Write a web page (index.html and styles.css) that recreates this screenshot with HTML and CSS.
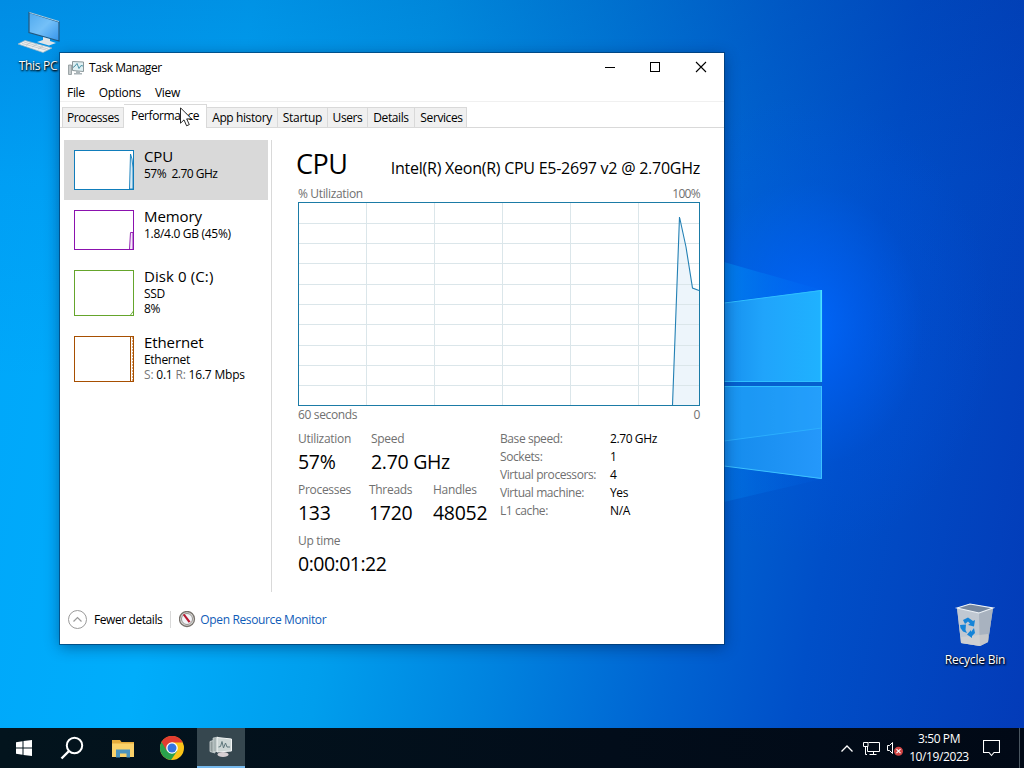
FILE: index.html
```html
<!DOCTYPE html>
<html lang="en">
<head>
  <meta charset="UTF-8" />
  <meta name="viewport" content="width=device-width, initial-scale=1.0" />
  <title>Task Manager</title>
  <link rel="stylesheet" href="styles.css">
</head>
<body>
  <div class="desktop">
    <!-- Wallpaper -->
    <svg class="wallpaper" viewBox="0 0 1024 728" preserveAspectRatio="none">
      <defs>
        <linearGradient id="pane" x1="0" y1="0" x2="1" y2="0">
          <stop offset="0%" stop-color="#168fee"/>
          <stop offset="40%" stop-color="#20a4fb"/>
          <stop offset="100%" stop-color="#1fb2ff"/>
        </linearGradient>
        <linearGradient id="paneLow" x1="0" y1="0" x2="1" y2="0">
          <stop offset="0%" stop-color="#148bec"/>
          <stop offset="100%" stop-color="#2598fb"/>
        </linearGradient>
        <linearGradient id="beam" x1="0" y1="0" x2="1" y2="0">
          <stop offset="0%" stop-color="#0088f0" stop-opacity="0.7"/>
          <stop offset="100%" stop-color="#006cf8" stop-opacity="0.1"/>
        </linearGradient>
      </defs>
      <path d="M724 262 L822 290 L724 302Z" fill="url(#beam)"/>
      <path d="M724 466 L822 479 L724 502Z" fill="url(#beam)" opacity="0.5"/>
      <path d="M724 303 L822 290 V382 H724Z" fill="url(#pane)"/>
      <path d="M724 386 H822 V479 L724 466Z" fill="url(#paneLow)"/>
      <path d="M724 386 H822 V428 L724 441Z" fill="#25b0ff" opacity="0.3"/>
      <path d="M724 441 L822 428" stroke="#2fb4ff" stroke-width="0.800"/>
      <path d="M724 382 H822 V386 H724Z" fill="#0560cf"/>
      <path d="M724 303 L821 290.500 V381.500 H724 M724 386.500 H821" fill="none" stroke="#2fc0ff" stroke-width="1"/>
      <path d="M821.500 386 V478.500 L724 466" fill="none" stroke="#3cc2ff" stroke-width="1"/>
      <path d="M821.300 290 V382" stroke="#4be0ff" stroke-width="1.500"/>
    </svg>

    <!-- Desktop icons -->
    <div class="icon this-pc">
      <svg width="46" height="44" viewBox="0 0 46 44">
        <defs>
          <linearGradient id="screen" x1="0" y1="0" x2="1" y2="1">
            <stop offset="0%" stop-color="#4fa9ee"/>
            <stop offset="50%" stop-color="#74c0f8"/>
            <stop offset="100%" stop-color="#3494ea"/>
          </linearGradient>
        </defs>
        <path d="M14 2.500 L44 12 V31 L14 22.500Z" fill="url(#screen)" stroke="#24587e" stroke-width="1.200"/>
        <path d="M14.500 2.500 L44 11.500" stroke="#c8e8fa" stroke-width="0.800"/>
        <path d="M28 27 L35 29 V31 L41 33 L34 35.500 L22 32 L28 30Z" fill="#dde4e8"/>
        <path d="M3 34 L10 30.500 L37 38 L28 42.500Z" fill="#eef0f0" stroke="#9bb4c4" stroke-width="0.700"/>
        <path d="M7 33.500 L31 40 M9 32 L33 39 M11 35.500 L16 32 M17 37 L22 34 M23 39 L28 36" stroke="#b6bfc4" stroke-width="0.700"/>
      </svg>
      <span class="icon-label">This PC</span>
    </div>
    <div class="icon recycle-bin">
      <svg width="42" height="46" viewBox="0 0 42 46">
        <path d="M3 6 L16 2 L39 6 L34 40 L26 44 L7 41Z" fill="#b4bcc6"/>
        <path d="M3 6 L25 11 L26 44 L7 41Z" fill="#c0c8d2"/>
        <path d="M25 11 L39 6 L34 40 L26 44Z" fill="#a8b2bf"/>
        <path d="M3 6 L16 2 L39 6 L25 11Z" fill="#77889e" stroke="#eef3f8" stroke-width="1.200"/>
        <path d="M7 35 L34 32 V40 L26 44 L7 41Z" fill="#d8d6d2" opacity="0.600"/>
        <g fill="#1584d8">
          <path d="M9 18 L14 15.500 L19 19 L21 18 L20 24.500 L14 23 L16 21.500 L14 19.500 L11 22Z"/>
          <path d="M6 23 L12 22.500 L11.500 28 L13 31 L9 29.500 L6.500 26Z"/>
          <path d="M20 26 L21 31 L18 34 L18 36 L13 32.500 L17 28 L17 30Z"/>
        </g>
      </svg>
      <span class="icon-label">Recycle Bin</span>
    </div>

    <!-- Task Manager window -->
    <div class="window">
      <div class="titlebar">
        <svg class="app-icon" width="17" height="16" viewBox="0 0 17 16">
          <path d="M0.500 5 H3.500 V14.500 H0.500Z" fill="#c4cacc" stroke="#8c9598" stroke-width="0.800"/>
          <path d="M4.500 1.500 L15.500 2 V11.500 L4.500 10.500Z" fill="#e0f0f3" stroke="#8b979a"/>
          <path d="M5 7.500 L7 6 L9 3.500 L11 8.500 L13 5.500 L15 6" fill="none" stroke="#4b93a6" stroke-width="1"/>
          <path d="M8 11 H12 V13 H14 V14.500 H6 V13 H8Z" fill="#aab4b8"/>
        </svg>
        <span class="title">Task Manager</span>
        <div class="controls">
          <svg width="46" height="30" viewBox="0 0 46 30"><path d="M18 14.500 H28" stroke="#000"/></svg>
          <svg width="45" height="30" viewBox="0 0 45 30"><rect x="17.500" y="9.500" width="9" height="9" fill="none" stroke="#000"/></svg>
          <svg width="46" height="30" viewBox="0 0 46 30"><path d="M18 9 L28 19 M28 9 L18 19" stroke="#000" stroke-width="1.100"/></svg>
        </div>
      </div>
      <div class="menu">
        <span>File</span>
        <span>Options</span>
        <span>View</span>
      </div>
      <div class="tabs">
        <div class="tab tab-processes">Processes</div>
        <div class="tab tab-performance active">Performance</div>
        <div class="tab tab-history">App history</div>
        <div class="tab tab-startup">Startup</div>
        <div class="tab tab-users">Users</div>
        <div class="tab tab-details">Details</div>
        <div class="tab tab-services">Services</div>
      </div>

      <div class="main">
        <div class="sidebar">
          <div class="item selected">
            <svg class="thumb" width="60" height="40" viewBox="0 0 60 40">
              <rect x="0.500" y="0.500" width="59" height="39" fill="#fff" stroke="#117dbb"/>
              <path d="M55.500 39 L56.500 4 L58 9 L59 18 V39Z" fill="#d9eaf4" stroke="#117dbb" stroke-width="0.900"/>
            </svg>
            <div class="item-text">
              <div class="item-name">CPU</div>
              <div class="item-info usage">57%&nbsp; 2.70 GHz</div>
            </div>
          </div>
          <div class="item">
            <svg class="thumb" width="60" height="40" viewBox="0 0 60 40">
              <rect x="0.500" y="0.500" width="59" height="39" fill="#fff" stroke="#8b12ae"/>
              <path d="M55.500 39 L56.500 22.500 H59 V39" fill="#f4eaf8" stroke="#8b12ae" stroke-width="0.900"/>
            </svg>
            <div class="item-text">
              <div class="item-name">Memory</div>
              <div class="item-info">1.8/4.0 GB (45%)</div>
            </div>
          </div>
          <div class="item tall">
            <svg class="thumb" width="60" height="46" viewBox="0 0 60 46">
              <rect x="0.500" y="0.500" width="59" height="45" fill="#fff" stroke="#65a52c"/>
              <path d="M56.500 45 L59.500 41" stroke="#65a52c" stroke-width="0.900"/>
            </svg>
            <div class="item-text">
              <div class="item-name disk-name">Disk 0 (C:)</div>
              <div class="item-info">SSD</div>
              <div class="item-info">8%</div>
            </div>
          </div>
          <div class="item tall">
            <svg class="thumb" width="60" height="46" viewBox="0 0 60 46">
              <rect x="0.500" y="0.500" width="59" height="45" fill="#fff" stroke="#a74f01"/>
              <path d="M56.500 1 V45" stroke="#a74f01"/>
              <path d="M58.500 1 V45" stroke="#d9a677" stroke-dasharray="2 1"/>
            </svg>
            <div class="item-text">
              <div class="item-name">Ethernet</div>
              <div class="item-info">Ethernet</div>
              <div class="item-info traffic"><i>S:</i> 0.1 <i>R:</i> 16.7 Mbps</div>
            </div>
          </div>
        </div>

        <div class="details">
          <div class="heading">
            <h1>CPU</h1>
            <span class="model">Intel(R) Xeon(R) CPU E5-2697 v2 @ 2.70GHz</span>
          </div>
          <div class="caption"><span>% Utilization</span><span class="max">100%</span></div>
          <svg class="graph" width="402" height="204" viewBox="0 0 402 204">
            <rect x="0.500" y="0.500" width="401" height="203" fill="#fff"/>
            <path d="M374.500 203 L381.500 15 L388 45 L394.500 86 L401 88.500 V203Z" fill="#edf5fb"/>
            <path d="M68.500 1 V203 M136.500 1 V203 M204.500 1 V203 M272.500 1 V203 M340.500 1 V203 M1 21.500 H401 M1 41.500 H401 M1 61.500 H401 M1 82.500 H401 M1 102.500 H401 M1 122.500 H401 M1 143.500 H401 M1 163.500 H401 M1 183.500 H401" stroke="#dbe6ea" stroke-width="1"/>
            <path d="M374.500 203 L381.500 15 L388 45 L394.500 86 L401 88.500" fill="none" stroke="#2380b4" stroke-width="1.100"/>
            <rect x="0.500" y="0.500" width="401" height="203" fill="none" stroke="#1b7ba6"/>
          </svg>
          <div class="caption bottom"><span>60 seconds</span><span>0</span></div>

          <div class="stats">
            <div class="stats-left">
              <div class="stat-row">
                <div class="stat utilization"><label>Utilization</label><b>57%</b></div>
                <div class="stat"><label>Speed</label><b>2.70 GHz</b></div>
              </div>
              <div class="stat-row">
                <div class="stat processes"><label>Processes</label><b>133</b></div>
                <div class="stat threads"><label>Threads</label><b>1720</b></div>
                <div class="stat"><label>Handles</label><b>48052</b></div>
              </div>
              <div class="stat-row">
                <div class="stat"><label>Up time</label><b class="uptime">0:00:01:22</b></div>
              </div>
            </div>
            <div class="specs">
              <label>Base speed:</label><span>2.70 GHz</span>
              <label>Sockets:</label><span>1</span>
              <label>Virtual processors:</label><span>4</span>
              <label>Virtual machine:</label><span>Yes</span>
              <label>L1 cache:</label><span>N/A</span>
            </div>
          </div>
        </div>
      </div>

      <div class="footer">
        <svg width="20" height="20" viewBox="0 0 20 20">
          <circle cx="9.500" cy="9.500" r="9" fill="#fff" stroke="#9a9a9a"/>
          <path d="M5.500 11.500 L9.500 7.500 L13.500 11.500" fill="none" stroke="#9a9a9a" stroke-width="1.200"/>
        </svg>
        <span class="fewer">Fewer details</span>
        <span class="separator"></span>
        <svg width="17" height="17" viewBox="0 0 17 17">
          <circle cx="8" cy="8" r="7.500" fill="#dededb" stroke="#77726d" stroke-width="1.300"/>
          <circle cx="8" cy="8" r="5.500" fill="#f2f4f8" stroke="#8f8a86" stroke-width="0.900"/>
          <path d="M3.700 3.700 L5.700 3.100 L11.500 10.500 L9.700 11.700Z" fill="#b81830"/>
        </svg>
        <a class="monitor">Open Resource Monitor</a>
      </div>
    </div>

    <svg class="cursor" width="13" height="20" viewBox="0 0 13 20">
      <path d="M0.500 0.800 V16.200 L4 12.900 L6.600 18.800 L9.300 17.600 L6.700 11.900 H11.600Z" fill="#fff" stroke="#111" stroke-width="0.900"/>
    </svg>
  </div>

  <div class="taskbar">
    <div class="task">
      <svg width="16" height="16" viewBox="0 0 16 16">
        <path d="M0 2.200 L6.500 1.300 V7.500 H0Z M7.500 1.100 L16 0 V7.500 H7.500Z M0 8.500 H6.500 V14.700 L0 13.800Z M7.500 8.500 H16 V16 L7.500 14.900Z" fill="#fff"/>
      </svg>
    </div>
    <div class="task">
      <svg width="24" height="24" viewBox="0 0 24 24">
        <circle cx="14.500" cy="9.500" r="7.700" fill="none" stroke="#fff" stroke-width="2"/>
        <path d="M9 15 L1.500 22.500" stroke="#fff" stroke-width="2.400"/>
      </svg>
    </div>
    <div class="task explorer">
      <svg width="22" height="19" viewBox="0 0 22 19">
        <path d="M0 1 H8 L9.500 3 H22 V18 H0Z" fill="#e5ac3c"/>
        <path d="M0 4.500 H22 V18 H0Z" fill="#fad26a"/>
        <path d="M4 10.500 H18 V18.500 H14.500 V14.500 H8 V18.500 H4Z" fill="#4b93bd"/>
      </svg>
    </div>
    <div class="task">
      <svg width="24" height="24" viewBox="0 0 24 24">
        <circle cx="12" cy="12" r="12" fill="#fbc418"/>
        <path d="M1.600 6 A12 12 0 0 0 11 24 L17.200 15 L12 12Z" fill="#2aa24c"/>
        <path d="M1.600 6 L7 15 L12 6.500 H22.700 A12 12 0 0 0 1.600 6Z" fill="#e23c30"/>
        <circle cx="12" cy="12" r="5.800" fill="#fff"/>
        <circle cx="12" cy="12" r="4.500" fill="#3474e0"/>
      </svg>
    </div>
    <div class="task running">
      <svg width="24" height="22" viewBox="0 0 24 22">
        <path d="M1 5.500 L6 4 V17 L1 15.500Z" fill="#8f9b9b" stroke="#d5dcdc" stroke-width="0.800"/>
        <path d="M4 2 L9 1 V15.500 H4Z" fill="#a8b4b4" stroke="#d5dcdc" stroke-width="0.600"/>
        <path d="M8 1.500 L22.500 3 V15 L8 16Z" fill="#cdd6d5" stroke="#f2f5f5"/>
        <path d="M9.500 11 L11.500 10.500 L13 5.500 L14.500 12 L16.500 7 L18 11 H21" fill="none" stroke="#5f777c" stroke-width="1"/>
        <ellipse cx="14" cy="18.500" rx="5.500" ry="2.500" fill="#d7cfd2"/>
      </svg>
    </div>
    <div class="tray">
      <svg width="14" height="9" viewBox="0 0 14 9"><path d="M1.500 7.500 L7 2 L12.500 7.500" fill="none" stroke="#fff" stroke-width="1.300"/></svg>
      <svg class="network" width="17" height="15" viewBox="0 0 17 15">
        <path d="M5.500 1.500 H16.500 V10.500 H4.500 V6 M10.500 10.500 V13.500 M6.500 13.500 H13.500" fill="none" stroke="#fff"/>
        <path d="M0.500 1.500 H5 V5.500 H0.500Z M2.500 5.500 V13.500 H4" fill="none" stroke="#fff"/>
      </svg>
      <svg class="volume" width="17" height="15" viewBox="0 0 17 15">
        <path d="M0.500 4.500 H2.500 L5.500 1.500 V12.500 L2.500 9.500 H0.500Z" fill="none" stroke="#fff"/>
        <circle cx="11.500" cy="10.200" r="4.500" fill="#d04444"/>
        <path d="M9.500 8.200 L13.500 12.200 M13.500 8.200 L9.500 12.200" stroke="#fff" stroke-width="1.100"/>
      </svg>
      <div class="clock"><span>3:50 PM</span><span>10/19/2023</span></div>
      <svg class="notify" width="17" height="17" viewBox="0 0 17 17"><path d="M0.500 0.500 H16.500 V12.500 H11 L8.500 15.500 L6 12.500 H0.500Z" fill="none" stroke="#fff" stroke-width="1.100"/></svg>
      <span class="show-desktop"></span>
    </div>
  </div>
</body>
</html>
```

FILE: styles.css
```css
* {
  box-sizing: border-box;
}
body {
  margin: 0;
  width: 1024px;
  height: 768px;
  overflow: hidden;
  display: flex;
  flex-direction: column;
  font-family: "Open Sans", "Noto Sans", sans-serif;
  font-size: 12px;
  letter-spacing: -0.4px;
  color: #000;
}
svg {
  display: block;
  flex: none;
}
/* Desktop */
.desktop {
  position: relative;
  height: 728px;
  background:
    radial-gradient(ellipse 190px 230px at 805px 325px, rgba(0, 104, 255, 0.9) 0, rgba(0, 98, 250, 0.6) 28%, rgba(0, 85, 230, 0.2) 62%, rgba(0, 80, 225, 0) 100%),
    linear-gradient(to bottom, rgba(0, 40, 140, 0.2) 0, rgba(0, 60, 170, 0.08) 180px, rgba(0, 0, 0, 0) 380px),
    linear-gradient(100deg, #00a6fa 0%, #00adfb 22%, #009eed 38%, #0083df 53%, #0064d2 68%, #004fc8 80%, #033bb8 100%);
}
.wallpaper {
  width: 1024px;
  height: 728px;
}
.icon {
  position: absolute;
  display: flex;
  flex-direction: column;
  align-items: center;
  width: 74px;
  color: #fff;
}
.icon-label {
  margin-top: 4px;
  line-height: 16px;
  letter-spacing: -0.3px;
  text-shadow: 0 1px 2px #000, 1px 1px 2px #000;
}
.this-pc {
  left: 1px;
  top: 10px;
}
.recycle-bin {
  left: 938px;
  top: 602px;
}
.recycle-bin .icon-label {
  letter-spacing: -0.2px;
}
.cursor {
  position: absolute;
  left: 180px;
  top: 107px;
}
/* Window */
.window {
  position: absolute;
  left: 60px;
  top: 53px;
  width: 664px;
  height: 591px;
  display: flex;
  flex-direction: column;
  background: #fff;
  box-shadow: 0 0 0 1px rgba(0, 55, 105, 0.65), 0 3px 14px rgba(0, 20, 60, 0.45);
}
.titlebar {
  display: flex;
  height: 30px;
  padding-left: 8px;
}
.app-icon {
  margin-top: 7px;
}
.title {
  margin-left: 4px;
  line-height: 30px;
  letter-spacing: -0.45px;
}
.controls {
  display: flex;
  margin-left: auto;
}
.menu {
  display: flex;
  gap: 14px;
  height: 19px;
  padding-left: 7px;
  line-height: 20px;
  letter-spacing: -0.3px;
  border-bottom: 1px solid #f0f0f0;
}
.tabs {
  display: flex;
  align-items: flex-end;
  height: 26px;
  padding-left: 2px;
  border-bottom: 1px solid #d9d9d9;
}
.tab {
  height: 20px;
  line-height: 20px;
  text-align: center;
  background: #f0f0f0;
  border: 1px solid #d9d9d9;
  border-left: none;
  border-bottom: none;
  white-space: nowrap;
}
.tab.active {
  height: 24px;
  margin-bottom: -1px;
  line-height: 22px;
  letter-spacing: -0.4px;
  background: #fff;
}
.tab-processes {
  width: 62px;
  border-left: 1px solid #d9d9d9;
}
.tab-performance { width: 83px; }
.tab-history { width: 71px; }
.tab-startup {
  width: 50px;
  letter-spacing: -0.3px;
}
.tab-users { width: 40px; }
.tab-details { width: 47px; }
.tab-services {
  width: 52px;
  padding-left: 2px;
}
.main {
  display: flex;
  height: 464px;
  padding: 12px 24px 0 4px;
}
/* Device list */
.sidebar {
  width: 208px;
  border-right: 1px solid #d9d9d9;
}
.item {
  display: flex;
  gap: 10px;
  width: 204px;
  height: 60px;
  padding: 10px 0 0 10px;
}
.item.tall {
  height: 66px;
}
.item.selected {
  background: #d9d9d9;
}
.item-text {
  margin-top: -4px;
  white-space: nowrap;
}
.item-name {
  font-size: 15px;
  line-height: 21px;
  margin-bottom: -1px;
  letter-spacing: -0.1px;
}
.disk-name {
  letter-spacing: 0.1px;
}
.item-info {
  line-height: 15px;
  letter-spacing: -0.3px;
}
.usage {
  letter-spacing: -0.5px;
}
.traffic {
  letter-spacing: -0.2px;
}
.item-info i {
  font-style: normal;
  color: #777;
}
/* Details */
.details {
  flex: 1;
  padding-left: 26px;
}
.heading {
  display: flex;
  justify-content: space-between;
  align-items: baseline;
  height: 46px;
  margin-left: -2px;
  line-height: 48px;
}
h1 {
  margin: 0;
  font-size: 27px;
  font-weight: 400;
  letter-spacing: -0.5px;
}
.model {
  font-size: 16px;
  letter-spacing: -0.25px;
}
.caption {
  display: flex;
  justify-content: space-between;
  height: 16px;
  line-height: 15px;
  color: #707070;
  letter-spacing: -0.35px;
}
.caption .max {
  letter-spacing: -0.7px;
}
.caption.bottom {
  line-height: 18px;
}
.stats {
  display: flex;
  margin-top: 8px;
}
.stats-left {
  width: 202px;
}
.stat-row {
  display: flex;
  height: 51px;
}
.stat {
  display: flex;
  flex-direction: column;
}
label {
  line-height: 17px;
  color: #707070;
  letter-spacing: -0.3px;
  white-space: nowrap;
}
.stat b {
  font-size: 19.5px;
  font-weight: 400;
  line-height: 30px;
  letter-spacing: -0.3px;
}
.stat .uptime {
  letter-spacing: -0.5px;
}
.utilization { width: 73px; }
.processes { width: 71px; }
.threads { width: 64px; }
.specs {
  display: grid;
  grid-template-columns: 110px auto;
  grid-auto-rows: 18px;
  line-height: 17px;
}
.specs label {
  letter-spacing: -0.42px;
}
/* Footer */
.footer {
  display: flex;
  align-items: center;
  height: 52px;
  padding: 3px 0 0 8px;
}
.fewer {
  margin-left: 6px;
  letter-spacing: -0.42px;
}
.separator {
  width: 1px;
  height: 17px;
  margin: 0 8px;
  background: #d9d9d9;
}
.monitor {
  margin-left: 4px;
  color: #0f5cb8;
  letter-spacing: -0.37px;
}
/* Taskbar */
.taskbar {
  display: flex;
  height: 40px;
  background: linear-gradient(to right, #03141d, #020d1a 60%, #010916);
  color: #fff;
}
.task {
  display: flex;
  align-items: center;
  justify-content: center;
  width: 48px;
}
.explorer {
  margin: 0 1px 0 3px;
}
.task.running {
  margin-left: 1px;
  background: #36474f;
  border-bottom: 2px solid #76b9ed;
}
.tray {
  display: flex;
  align-items: center;
  margin-left: auto;
}
.network {
  margin-left: 9px;
}
.volume {
  margin-left: 7px;
}
.clock {
  display: flex;
  flex-direction: column;
  align-items: center;
  width: 60px;
  margin-left: 5px;
  line-height: 18px;
}
.notify {
  margin-left: 14px;
}
.show-desktop {
  width: 1px;
  height: 40px;
  margin: 0 4px 0 19px;
  background: #4a5660;
}
```
